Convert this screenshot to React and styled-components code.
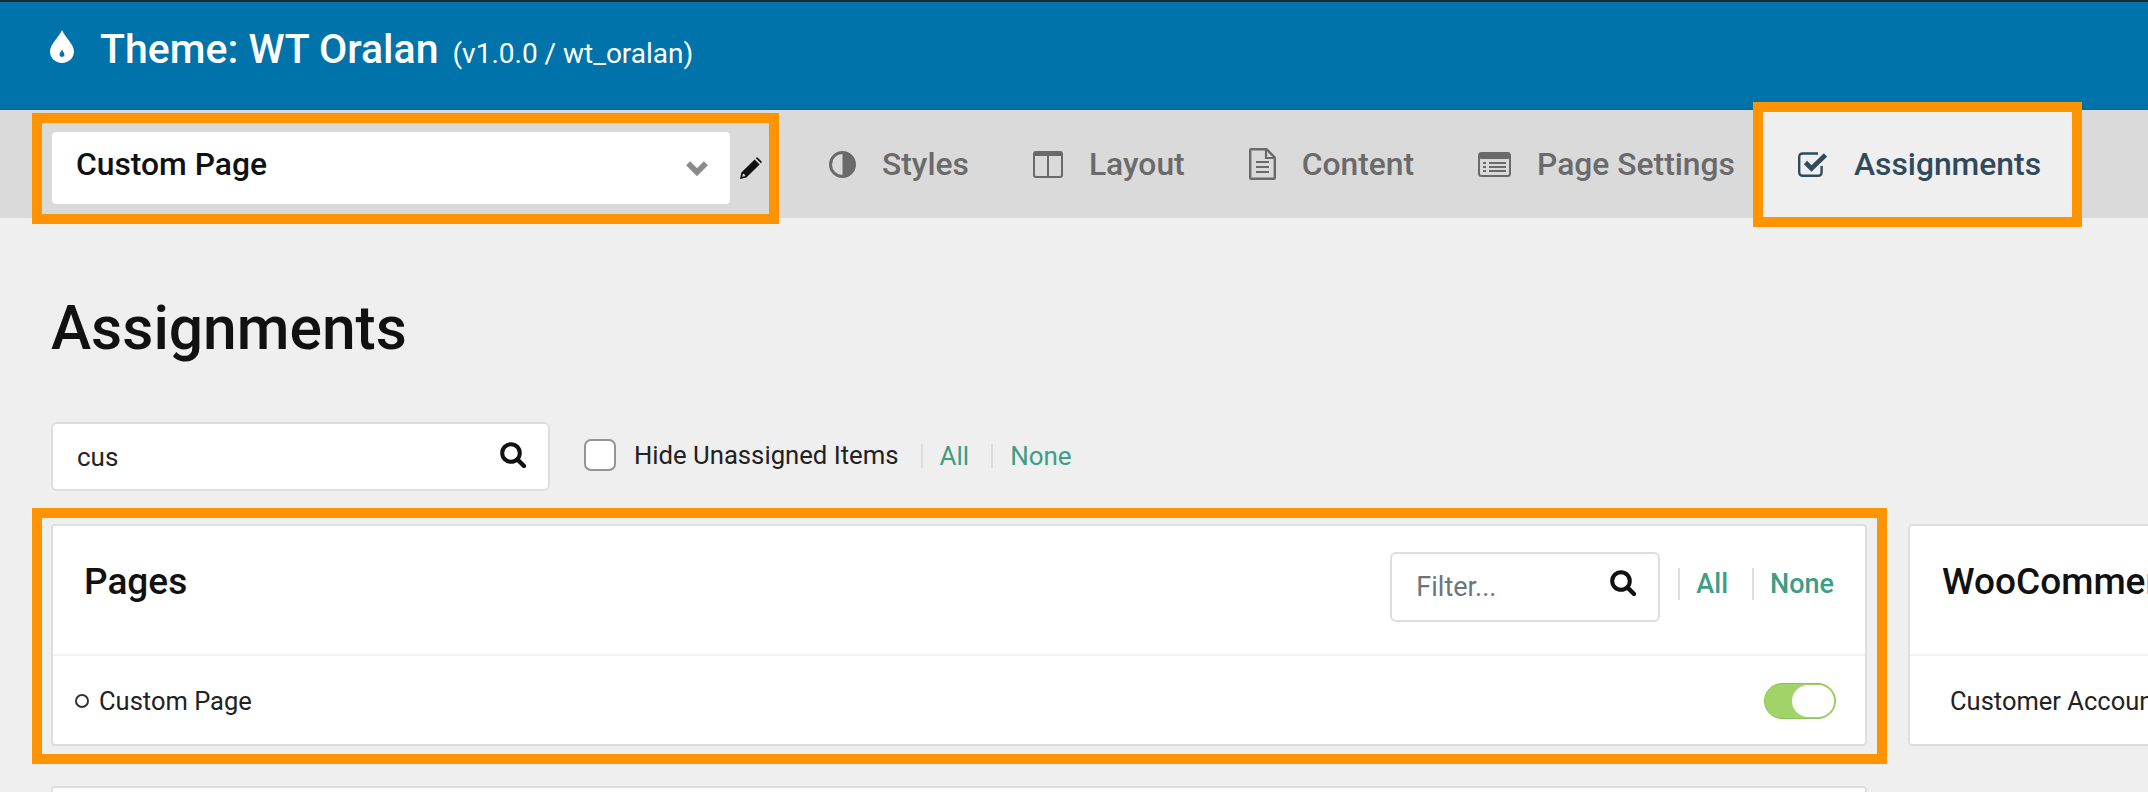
import React from 'react'
import styled, { createGlobalStyle } from 'styled-components'

const GlobalStyle = createGlobalStyle`
  html, body {
    margin: 0;
    height: 792px;
    overflow: hidden;
    background: #efefef;
  }
  body {
    font-family: Roboto, "Liberation Sans", sans-serif;
    color: #111;
  }
  * { box-sizing: border-box; }
`

const Header = styled.header`
  height: 110px;
  border-top: 2px solid #1a2833;
  background: linear-gradient(#0073aa 94%, #006da1);
  display: flex;
  align-items: flex-start;
  padding: 23px 0 0 50px;
  color: #fff;
`

const Title = styled.h1`
  margin: 0 0 0 26px;
  font-size: 41px;
  line-height: 48px;
  font-weight: 500;
  white-space: nowrap;
`

const Version = styled.small`
  margin-left: 14px;
  font-size: 28px;
  font-weight: 400;
`

const TabBar = styled.nav`
  height: 108px;
  background: #dadada;
  display: flex;
  align-items: stretch;
  padding-left: 52px;
`

const Frame = styled.span`
  position: absolute;
  top: ${p => p.$top}px;
  right: ${p => p.$right}px;
  bottom: ${p => p.$bottom}px;
  left: ${p => p.$left}px;
  border: 10px solid #ff9400;
  pointer-events: none;
`

const PageSelect = styled.div`
  position: relative;
  width: 710px;
  display: flex;
  align-items: center;
  gap: 10px;
  padding-top: 8px;
`

const SelectBox = styled.div`
  width: 678px;
  height: 72px;
  background: #fff;
  border-radius: 4px;
  display: flex;
  align-items: center;
  justify-content: space-between;
  padding: 0 21px 9px 24px;
  font-size: 31.8px;
  font-weight: 500;

  svg {
    margin-top: 9px;
  }
`

const Tabs = styled.div`
  display: flex;
  margin-left: 35px;
`

const Tab = styled.a`
  position: relative;
  display: flex;
  align-items: center;
  gap: 26px;
  margin-left: ${p => (p.$active ? -4 : 0)}px;
  padding: 0 ${p => (p.$active ? 31 : 32)}px 0 ${p => (p.$active ? 35 : 32)}px;
  font-size: 31.8px;
  font-weight: 500;
  color: ${p => (p.$active ? '#2f4a5c' : '#6a6a6a')};
  background: ${p => (p.$active ? '#efefef' : 'transparent')};
  white-space: nowrap;
`

const Main = styled.main`
  padding: 0 0 0 51px;
  overflow: hidden;
`

const Heading = styled.h2`
  margin: 0;
  padding-top: 76px;
  font-size: 60.5px;
  line-height: 70px;
  font-weight: 500;
`

const Toolbar = styled.div`
  display: flex;
  align-items: center;
  margin-top: 58px;
  height: 69px;
`

const SearchBox = styled.div`
  width: ${p => p.$width}px;
  height: ${p => p.$height}px;
  background: #fff;
  border: 2px solid #dedede;
  border-radius: 6px;
  display: flex;
  align-items: center;
  justify-content: space-between;
  padding: 0 ${p => p.$iconGap}px 0 ${p => p.$textGap}px;
  font-size: ${p => p.$size}px;
  color: ${p => (p.$muted ? '#6c757d' : '#222')};

  svg {
    margin-top: ${p => p.$iconLift}px;
  }
`

const Checkbox = styled.span`
  width: 32px;
  height: 32px;
  margin: -3px 18px 0 34px;
  background: #fff;
  border: 2px solid #949494;
  border-radius: 7px;
`

const CheckLabel = styled.span`
  margin-top: -3px;
  font-size: 25.7px;
  color: #222;
`

const Links = styled.div`
  display: flex;
  align-items: center;
  margin-left: ${p => p.$gap}px;
`

const Link = styled.a`
  display: block;
  margin-left: ${p => (p.$first ? 0 : p.$space)}px;
  margin-top: ${p => p.$top || 0}px;
  padding-left: ${p => p.$pad}px;
  border-left: 2px solid #dcdcdc;
  font-size: ${p => p.$size}px;
  line-height: ${p => p.$tall}px;
  font-weight: ${p => p.$weight};
  color: #3f9c85;
`

const CardGrid = styled.div`
  display: grid;
  grid-template-columns: 1816px 1816px;
  column-gap: 41px;
  row-gap: 40px;
  margin-top: 33px;
`

const Card = styled.section`
  position: relative;
  height: ${p => p.$height || 222}px;
  background: #fff;
  border: 2px solid #dedede;
  border-radius: 4px;
  display: flex;
  flex-direction: column;
`

const CardHeader = styled.div`
  height: 130px;
  border-bottom: 2px solid #f4f4f4;
  display: flex;
  justify-content: space-between;
  padding: 26px 31px 0 ${p => p.$inset || 31}px;
`

const CardTitle = styled.h3`
  margin: 8px 0 0;
  font-size: 37px;
  line-height: 44px;
  font-weight: 500;
`

const CardTools = styled.div`
  display: flex;
  align-items: flex-start;
`

const CardRow = styled.div`
  flex: 1;
  display: flex;
  align-items: center;
  justify-content: space-between;
  padding: 2px 29px 0 ${p => p.$inset}px;
  font-size: 25.5px;
  color: #222;
  white-space: nowrap;
`

const RowLabel = styled.span`
  display: flex;
  align-items: center;
`

const Bullet = styled.i`
  width: 14px;
  height: 14px;
  margin-right: 10px;
  border: 2px solid #333;
  border-radius: 50%;
`

const Toggle = styled.span`
  width: 72px;
  height: 36px;
  padding: 1px;
  background: #a0d468;
  border: 1px solid #8dc35a;
  border-radius: 18px;
  display: flex;
  justify-content: flex-end;
`

const Knob = styled.span`
  width: 42px;
  height: 32px;
  background: #fff;
  border-radius: 16px;
`

const Drop = () => (
  <svg width="24" height="33" viewBox="0 0 24 33" style={{ flex: 'none', marginTop: 5 }}>
    <path
      fill="#fff"
      fillRule="evenodd"
      d="M12 0C14 6 24 14 24 21.5C24 28 18.6 33 12 33S0 28 0 21.5C0 14 10 6 12 0ZM9.5 24.5C9.5 26 10.6 27 12 27S14.5 26 14.5 24.5C14.5 23 12.8 21.8 12 19.5C11.2 21.8 9.5 23 9.5 24.5Z"
    />
  </svg>
)

const Chevron = () => (
  <svg width="24" height="16" viewBox="0 0 23 15">
    <path d="M3 3L11.5 11.5L20 3" fill="none" stroke="#8a8a8a" strokeWidth="5.5" />
  </svg>
)

const Pencil = () => (
  <svg width="22" height="22" viewBox="0 0 22 22">
    <path fill="#111" fillRule="evenodd" d="M0 22L1.4 15.6L14.6 2.4L19.6 7.4L6.4 20.6ZM3 16.5L2.2 19.8L5.5 19L4.6 17.4Z" />
    <path fill="#111" d="M15.8 1.2L16.6 .4Q17.1 0 17.6 .4L21.6 4.4Q22 4.9 21.6 5.4L20.8 6.2Z" />
  </svg>
)

const AdjustIcon = ({ color }) => (
  <svg width="27" height="27" viewBox="0 0 27 27">
    <circle cx="13.5" cy="13.5" r="12" fill="none" stroke={color} strokeWidth="3" />
    <path fill={color} d="M13.5 1.5A12 12 0 0 1 13.5 25.5Z" />
  </svg>
)

const LayoutIcon = ({ color }) => (
  <svg width="30" height="27" viewBox="0 0 30 27">
    <rect x="1" y="1" width="28" height="25" rx="2" fill="none" stroke={color} strokeWidth="2" />
    <rect x="1" y="1" width="28" height="4" fill={color} />
    <rect x="14" y="2" width="2" height="24" fill={color} />
  </svg>
)

const FileIcon = ({ color }) => (
  <svg width="27" height="32" viewBox="0 0 27 32">
    <path fill="none" stroke={color} strokeWidth="2.4" strokeLinejoin="round" d="M1.2 2.2Q1.2 1.2 2.2 1.2H17.5L25.8 9.5V29.8Q25.8 30.8 24.8 30.8H2.2Q1.2 30.8 1.2 29.8Z" />
    <path fill="none" stroke={color} strokeWidth="2.2" d="M17 1.5V10H25.5" />
    <path fill="none" stroke={color} strokeWidth="2" d="M7 14H20M7 19H20M7 24H20" />
  </svg>
)

const ListIcon = ({ color }) => (
  <svg width="33" height="25" viewBox="0 0 33 25">
    <rect x="1" y="1" width="31" height="23" rx="2.5" fill="none" stroke={color} strokeWidth="2" />
    <rect x="1" y="1" width="31" height="6" rx="2" fill={color} />
    <path fill="none" stroke={color} strokeWidth="2" d="M5 11H8M5 15H8M5 19H8M11 11H28M11 15H28M11 19H28" />
  </svg>
)

const CheckIcon = ({ color }) => (
  <svg width="30" height="25" viewBox="0 0 30 25">
    <path fill="none" stroke={color} strokeWidth="2.4" d="M20 1.5H5Q1.2 1.5 1.2 5V20Q1.2 23.8 5 23.8H20Q23.6 23.8 23.6 20V14" />
    <path fill="none" stroke={color} strokeWidth="4.6" d="M7.5 10.5L13.5 16.5L27.5 3" />
  </svg>
)

const SearchIcon = () => (
  <svg width="26" height="26" viewBox="0 0 26 26">
    <circle cx="11" cy="11" r="8.8" fill="none" stroke="#111" strokeWidth="4" />
    <path d="M17.5 17.5L24 24" stroke="#111" strokeWidth="4.4" strokeLinecap="round" />
  </svg>
)

const tabs = [
  { label: 'Styles', Icon: AdjustIcon },
  { label: 'Layout', Icon: LayoutIcon },
  { label: 'Content', Icon: FileIcon },
  { label: 'Page Settings', Icon: ListIcon },
  { label: 'Assignments', Icon: CheckIcon, active: true },
]

export default function App() {
  return (
    <>
      <GlobalStyle />
      <Header>
        <Drop />
        <Title>
          Theme: WT Oralan<Version>(v1.0.0 / wt_oralan)</Version>
        </Title>
      </Header>
      <TabBar>
        <PageSelect>
          <SelectBox>
            Custom Page
            <Chevron />
          </SelectBox>
          <Pencil />
          <Frame $top={3} $right={-17} $bottom={-6} $left={-20} />
        </PageSelect>
        <Tabs>
          {tabs.map(({ label, Icon, active }) => (
            <Tab key={label} $active={active}>
              <Icon color={active ? '#2f4a5c' : '#6a6a6a'} />
              {label}
              {active && <Frame $top={-8} $right={-10} $bottom={-9} $left={-10} />}
            </Tab>
          ))}
        </Tabs>
      </TabBar>
      <Main>
        <Heading>Assignments</Heading>
        <Toolbar>
          <SearchBox $width={499} $height={69} $size={26} $textGap={24} $iconGap={22} $iconLift={-3}>
            cus
            <SearchIcon />
          </SearchBox>
          <Checkbox />
          <CheckLabel>Hide Unassigned Items</CheckLabel>
          <Links $gap={22}>
            <Link $first $top={-2} $pad={17} $size={26} $tall={24} $weight={400}>All</Link>
            <Link $space={22} $top={-2} $pad={17} $size={26} $tall={24} $weight={400}>None</Link>
          </Links>
        </Toolbar>
        <CardGrid>
          <Card>
            <CardHeader>
              <CardTitle>Pages</CardTitle>
              <CardTools>
                <SearchBox $width={270} $height={70} $size={27} $textGap={24} $iconGap={22} $iconLift={-8} $muted>
                  Filter...
                  <SearchIcon />
                </SearchBox>
                <Links $gap={18}>
                  <Link $first $top={16} $pad={16} $size={27} $tall={32} $weight={500}>All</Link>
                  <Link $space={24} $top={16} $pad={16} $size={27} $tall={32} $weight={500}>None</Link>
                </Links>
              </CardTools>
            </CardHeader>
            <CardRow $inset={22}>
              <RowLabel>
                <Bullet />
                Custom Page
              </RowLabel>
              <Toggle>
                <Knob />
              </Toggle>
            </CardRow>
            <Frame $top={-18} $right={-22} $bottom={-20} $left={-21} />
          </Card>
          <Card>
            <CardHeader $inset={32}>
              <CardTitle>WooCommerce</CardTitle>
            </CardHeader>
            <CardRow $inset={40}>Customer Account</CardRow>
          </Card>
          <Card $height={120} />
        </CardGrid>
      </Main>
    </>
  )
}
